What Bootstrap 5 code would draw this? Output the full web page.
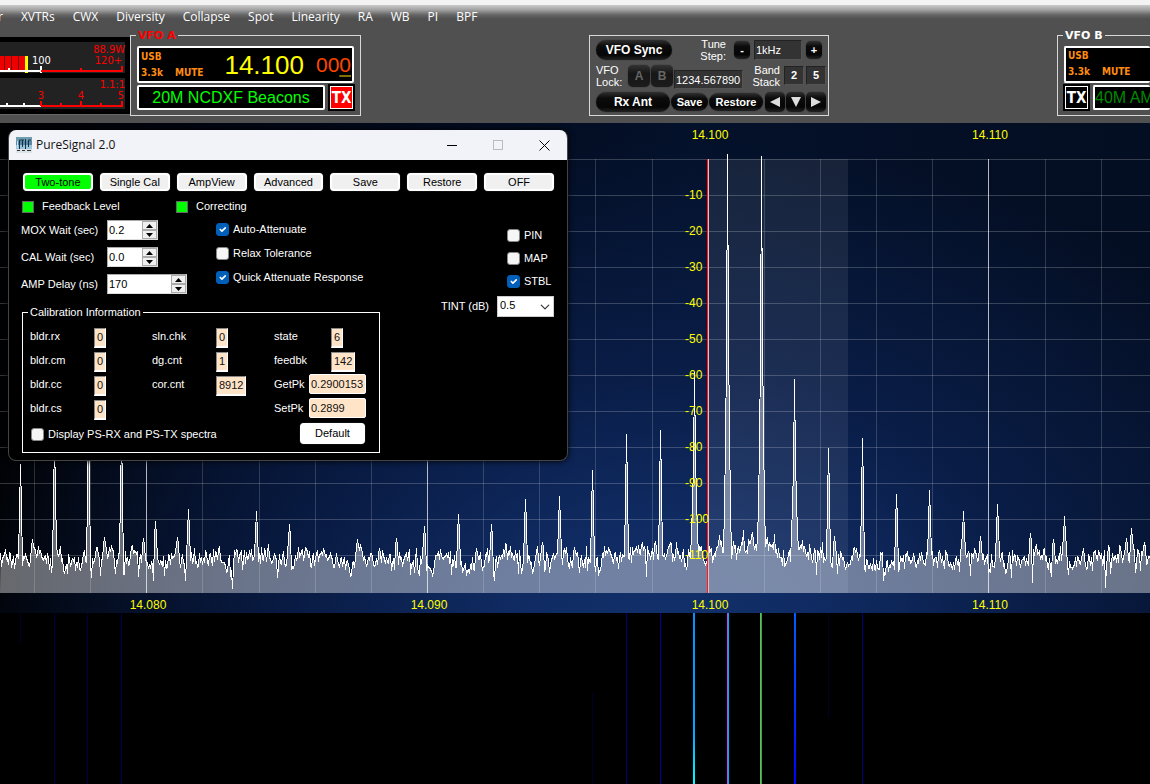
<!DOCTYPE html>
<html lang="en">
<head>
<meta charset="utf-8">
<meta name="viewport" content="width=device-width, initial-scale=1">
<title>PureSignal 2.0</title>
<link href="https://cdn.jsdelivr.net/npm/bootstrap@5.3.0/dist/css/bootstrap.min.css" rel="stylesheet">
<style>
body{font-family:"Liberation Sans",Arial,sans-serif;font-size:11px;line-height:13px;background:#000;color:#fff}
svg text{font-family:"Liberation Sans",Arial,sans-serif;font-size:12px}
label{cursor:default}
.console{background:linear-gradient(#cacaca,#a0a0a0 5px,#646464 10px,#505050 14px);border-top:5px solid #f3f3f3;height:123px}
.menu{height:24px;font:12px/24px "Open Sans",sans-serif;gap:18px;margin-left:-2px}
.menu a{color:#fff;text-decoration:none;white-space:nowrap}
.deck{margin-top:1px}
.tahoma{font-family:"DejaVu Sans Condensed","DejaVu Sans",sans-serif}
.meter{margin-top:7px}
.meter text{font-family:"DejaVu Sans Condensed","DejaVu Sans",sans-serif;font-size:11px}
/* VFO frames */
.vfo{border:1px solid #d8d8d8;height:87px;margin-top:-1px;padding:0 6px;min-width:0}
.vfo legend{float:none;width:auto;font:bold 11px/13px "DejaVu Sans",sans-serif;margin:0 0 4px -1px;padding:0 2px}
.vfo-a{width:231px}.vfo-a legend{color:#f00}
.vfo-b{width:93px;border-right:0;padding-right:0}
.lcd{background:#000;border:2px solid #fff;border-radius:2px;white-space:nowrap;overflow:hidden}
.readout{height:37px;padding:0 1px 0 2px;margin-bottom:2px}
.mode{color:#ff8c10;font-weight:bold;font-size:10px;line-height:16px;gap:12px}
.mhz{color:#ff0;font-size:26px;line-height:34px;margin-right:12px}
.hz{color:#ff4500;font-size:21px;line-height:34px}
.hz u{text-decoration-color:#807000;text-decoration-thickness:2px;text-underline-offset:3px}
.bandname{height:25px;line-height:21px;color:#0f0;font-size:16px;text-align:center}
.tx{width:25px;height:25px;background:#f00;border:1px solid #fff;outline:2px solid #000;outline-offset:-1px;box-shadow:inset 0 0 0 1px #fff;color:#fff;font:bold 15px/20px "DejaVu Sans Condensed",sans-serif;padding:0}
.tx.off{background:#000}
/* tuning panel */
.tuning{border:1px solid #d8d8d8;width:240px;height:81px;margin-top:5px;padding:1px 2px 0 6px;font-size:11px}
.tuning .lh-1{line-height:12px!important}
.pill{background:linear-gradient(#303030,#0c0c0c 30%,#060606 75%,#222);border:0;border-radius:10px;color:#fff;font:bold 12px/18px "Liberation Sans",Arial,sans-serif;height:20px;padding:0;text-align:center;box-shadow:0 0 1px #111}
.pill.sm{font-size:11px;height:18px}
.pill.key{border-radius:5px}
.pill.dim{color:#666;background:linear-gradient(#333,#161616 40%,#1c1c1c)}
.dark{background:#333;border:1px solid #555;border-top-color:#222;border-left-color:#222;color:#fff;font-size:11px;padding:0 1px;border-radius:0}
/* dialog */
.ps{position:absolute;left:8px;top:130px;width:560px;height:331px;background:#000;border:1px solid #444;border-top:0;border-radius:8px;overflow:hidden;box-shadow:0 0 6px #000}
.ps-title{background:#f1f3f9;color:#111;height:30px;font:12px/28px "Open Sans",sans-serif;padding:0 7px}
.ps-title button{border:0;background:none;width:46px;height:28px;padding:0}
.ps-body{padding:13px 13px 0 12px}
.modes{gap:5px;margin:0 -1px 0 1px}
.status{padding:6px 0 0 1px;margin-top:3px}
.wbtn{background:#f0f0f0;border:2px solid #fff;border-radius:4px;color:#000;font-size:11px;line-height:13px;height:18px;padding:0;box-shadow:0 0 1px #888}
.wbtn.row-btn{flex:1 1 0;margin:0 1px}
.wbtn.go{background:#0f0}
.wbtn.def{background:#fff;width:65px;height:21px;margin-top:-1px}
.led{width:12px;height:12px;background:#0f0;border:1px solid #666}
.numrow{height:20px;margin-bottom:7px}
.numrow label{width:86px;white-space:nowrap}
.numbox{background:#fff;border:1px solid #888;border-color:#aaa #ddd #ddd #aaa;width:51px;height:20px}
.numbox.wide{width:80px}
.numbox input{border:0;background:#fff;width:100%;min-width:0;padding:0 1px;font-size:11px;line-height:16px;color:#000;outline:0}
.numbox button{border:1px solid #aaa;background:#f0f0f0;width:15px;height:9px;padding:0;line-height:0;display:block}
.check{display:flex;align-items:center;gap:4px;height:13px;white-space:nowrap}
.check .form-check-input{width:13px;height:13px;margin:0;border-radius:3px;background-color:#f6f6f6;border-color:#888;flex:none}
.check .form-check-input:checked{background-color:#005fb8;border-color:#005fb8}
.tint{width:57px;height:21px;font-size:11px;line-height:17px;padding:0 16px 2px 2px;border-radius:0;border:1px solid #ccc;background-color:#fff;color:#000;background-position:right 3px center;background-size:10px 10px}
.calib{border:1px solid #fff;width:358px;height:147px;margin-top:5px;padding:0 7px}
.calib legend{float:none;width:auto;font-size:11px;line-height:13px;margin:0 0 9px -2px;padding:0 2px}
.calib-grid{display:grid;grid-template-columns:122px 122px 1fr}
.calib-grid label{width:64px}
.calib-grid .c3 label{width:57px}
.calib-grid .c3 label.pk{width:35px}
.item{height:24px;display:flex;align-items:flex-start}
.item label{padding-top:2px}
.val{background:#ffe4c8;color:#111;font-size:11px;line-height:16px;height:20px;border-top:1px solid #888;border-left:1px solid #888;border-right:1px solid #fff;border-bottom:2px solid #fff;padding:0 2px;min-width:12px}
.peak{background:#ffe4c8;border:1px solid #fff;border-radius:2px;width:57px;height:20px;padding:0 1px;font-size:11px;color:#111;margin-top:-2px}
.scope{display:block;width:100%;height:auto;background:
 radial-gradient(ellipse 62% 100% at 58% 103%,#12306b 0,#102b62 22%,rgba(10,31,76,.85) 52%,rgba(4,14,38,0) 100%),
 linear-gradient(90deg,#010204,#020716 25%,#04112a 60%,#040e22)}
.fall{display:block;width:100%;flex:1 1 171px;min-height:0;background:#000}
</style>
</head>
<body class="d-flex flex-column vh-100 overflow-hidden position-relative">
<header class="console flex-shrink-0 overflow-hidden">
  <nav class="menu d-flex">
    <a href="#">r</a><a href="#">XVTRs</a><a href="#">CWX</a><a href="#">Diversity</a><a href="#">Collapse</a><a href="#">Spot</a><a href="#">Linearity</a><a href="#">RA</a><a href="#">WB</a><a href="#">PI</a><a href="#">BPF</a>
  </nav>
  <div class="deck d-flex justify-content-between">
    <div class="d-flex">
      <svg class="meter flex-shrink-0" width="130" height="78" viewBox="0 0 130 78">
        <path d="M0 0H130V78H0Z" fill="#000"/><path d="M0 77.500H130.500V0" stroke="#666" fill="none"/>
        <path d="M0 5H125V36H0ZM0 41H125V72H0Z" fill="#222"/>
        <path d="M0 19H27V33H0Z" fill="#e00"/><path d="M4.500 19V33M11.500 19V33M18.500 19V33" stroke="#700"/>
        <path d="M26.500 19V36" stroke="#ff0" stroke-width="3"/>
        <path d="M0 34H41M41 36V29M9 34V31" stroke="#fff" stroke-width="2"/>
        <path d="M41 34H123M122 35V29M81 34V31" stroke="#f00" stroke-width="2"/>
        <path d="M0 69H41M7 69V66M24 69V66" stroke="#fff" stroke-width="2"/>
        <path d="M41 69H123M41 69V64M61 69V66M81 69V64M101 69V66M122 69V64" stroke="#f00" stroke-width="2"/>
        <text x="32" y="27" fill="#fff">100</text>
        <g fill="#f00" text-anchor="end"><text x="125" y="16">88.9W</text><text x="122" y="27">120+</text><text x="125" y="51">1.1:1</text></g>
        <g fill="#f00" text-anchor="middle"><text x="41" y="62">3</text><text x="81" y="62">4</text><text x="121" y="62">5</text></g>
      </svg>
      <fieldset class="vfo vfo-a">
        <legend>VFO A</legend>
        <div class="lcd readout d-flex justify-content-between">
          <div class="mode tahoma d-flex align-items-end"><div>USB<br>3.3k</div><div>MUTE</div></div>
          <div class="d-flex"><span class="mhz">14.100</span><span class="hz">00<u>0</u></span></div>
        </div>
        <div class="d-flex gap-1"><div class="lcd bandname flex-grow-1">20M NCDXF Beacons</div><button class="tx">TX</button></div>
      </fieldset>
    </div>
    <section class="tuning flex-shrink-0">
      <div class="d-flex align-items-center" style="height:25px">
        <button class="pill" style="width:76px">VFO Sync</button>
        <label for="step" class="text-end lh-1 ms-auto me-2">Tune<br>Step:</label>
        <button class="pill sm key" style="width:16px">-</button>
        <input id="step" class="dark mx-1" style="width:48px;height:20px" value="1kHz">
        <button class="pill sm key me-1" style="width:16px">+</button>
      </div>
      <div class="d-flex align-items-center" style="height:27px">
        <span class="lh-1" style="width:32px">VFO<br>Lock:</span>
        <button class="pill dim key" style="width:22px;height:22px">A</button><button class="pill dim key" style="width:22px;height:22px;margin-left:1px">B</button>
        <input aria-label="Saved frequency" class="dark mt-2" style="width:69px;height:19px;margin-left:1px" value="1234.567890">
        <span class="text-end lh-1 ms-auto me-1">Band<br>Stack</span>
        <button class="dark fw-bold" style="width:20px;height:19px">2</button><button class="dark fw-bold" style="width:20px;height:19px;margin-left:2px">5</button>
      </div>
      <div class="d-flex align-items-center" style="height:25px;gap:1px">
        <button class="pill" style="width:74px">Rx Ant</button>
        <button class="pill sm" style="width:37px">Save</button>
        <button class="pill sm" style="width:54px">Restore</button>
        <span class="d-flex ms-auto" style="gap:1px">
        <button class="pill key" style="width:20px" aria-label="Previous"><svg width="12" height="12" class="d-block m-auto"><path d="M11 1V11L1 6Z" fill="#ddd"/></svg></button>
        <button class="pill key" style="width:19px" aria-label="Down"><svg width="12" height="12" class="d-block m-auto"><path d="M1 1H11L6 11Z" fill="#ddd"/></svg></button>
        <button class="pill key" style="width:20px" aria-label="Next"><svg width="12" height="12" class="d-block m-auto"><path d="M1 1V11L11 6Z" fill="#ddd"/></svg></button></span>
      </div>
    </section>
    <fieldset class="vfo vfo-b">
      <legend>VFO B</legend>
      <div class="lcd readout border-end-0"><div class="mode tahoma d-flex align-items-end"><div>USB<br>3.3k</div><div>MUTE</div></div></div>
      <div class="d-flex gap-1"><button class="tx off flex-shrink-0">TX</button><div class="lcd bandname border-end-0 text-start flex-grow-1" style="color:#008a00;width:10px">40M AM</div></div>
    </fieldset>
  </div>
</header>

<svg class="scope flex-shrink-0" viewBox="0 123 1150 490">
  <path d="M708 159H848V593H708Z" fill="#fff" fill-opacity=".08"/>
  <g id="grid" shape-rendering="crispEdges"></g>
  <path id="area" fill="#fff" fill-opacity=".4"/>
  <path id="trace" fill="none" stroke="#fff" shape-rendering="crispEdges"/>
  <path d="M707 159h1V593h-1Z" fill="#ff1a1a"/><path d="M708 159h1V593h-1Z" fill="#ffb4b4"/>
  <g id="labels" fill="#ff0"></g>
</svg>
<svg class="fall" viewBox="0 0 1150 171" preserveAspectRatio="none" shape-rendering="crispEdges">
  <defs><linearGradient id="cy" x1="0" x2="0" y1="0" y2="1"><stop offset="0" stop-color="#0090ff"/><stop offset=".7" stop-color="#00a8ff"/><stop offset="1" stop-color="#00ffff"/></linearGradient>
  <linearGradient id="bl" x1="0" x2="0" y1="0" y2="1"><stop offset="0" stop-color="#0060ff"/><stop offset="1" stop-color="#0000ff"/></linearGradient></defs>
  <path d="M693 0h2v171h-2z" fill="url(#cy)"/>
  <path d="M727 0h1v171h-1z" fill="#b050f0"/><path d="M728 0h1v171h-1z" fill="#00a8ff"/>
  <path d="M760 0h1v171h-1z" fill="#0f0"/><path d="M761 0h1v171h-1z" fill="#a060a0"/>
  <path d="M794 0h2v171h-2z" fill="url(#bl)"/>
  <path d="M626 0h1v171h-1zM862 0h1v171h-1z" fill="#000078"/><path d="M660 0h1v171h-1z" fill="#0000a0"/>
  <path d="M54 0h1v171h-1zM87 0h1v171h-1z" fill="#00003c"/><path d="M121 0h1v171h-1z" fill="#000058"/>
  <path d="M828 0h1v105h-1zM592 80h1v91h-1zM20 0h1v30h-1z" fill="#000028"/>
</svg>

<div class="ps" role="dialog" aria-label="PureSignal 2.0">
  <div class="ps-title d-flex align-items-center">
    <svg width="16" height="16" class="me-1"><rect width="16" height="16" fill="#5b89a4"/><path d="M0 0H16V4H0Z" fill="#6f9fae"/><path d="M0 8H16V12H0Z" fill="#9cc6dc"/><path d="M3.500 12V3H8M6.500 3V10M9.500 12V2M12.500 10V3H15" stroke="#14304d" fill="none"/><path d="M1.500 4V11" stroke="#c3e3ef"/><path d="M0 12H16V16H0Z" fill="#dce4ea"/><path d="M1 13.500H4M6 13.500H9M11 13.500H15" stroke="#333"/></svg>
    <span class="me-auto">PureSignal 2.0</span>
    <button aria-label="Minimize"><svg width="11" height="11" class="d-block m-auto"><path d="M0 5.500H10" stroke="#000"/></svg></button>
    <button aria-label="Maximize" disabled><svg width="11" height="11" class="d-block m-auto"><rect x=".5" y=".5" width="9" height="9" fill="none" stroke="#bbb"/></svg></button>
    <button aria-label="Close" style="margin-right:-7px"><svg width="11" height="11" class="d-block m-auto"><path d="M.5 .5L10.500 10.500M10.500 .5L.5 10.500" stroke="#000"/></svg></button>
  </div>
  <div class="ps-body">
    <div class="modes d-flex">
      <button class="wbtn row-btn go">Two-tone</button><button class="wbtn row-btn">Single Cal</button><button class="wbtn row-btn">AmpView</button><button class="wbtn row-btn">Advanced</button><button class="wbtn row-btn">Save</button><button class="wbtn row-btn">Restore</button><button class="wbtn row-btn">OFF</button>
    </div>
    <div class="status d-flex align-items-center">
      <span class="led me-2"></span><span style="width:134px">Feedback Level</span><span class="led me-2"></span><span>Correcting</span>
    </div>
    <div class="d-flex">
      <div style="width:359px;padding-top:7px">
        <div class="d-flex">
          <div style="width:195px">
            <div class="numrow d-flex align-items-center"><label for="mox">MOX Wait (sec)</label><div class="numbox d-flex"><input id="mox" value="0.2"><div class="spin"></div></div></div>
            <div class="numrow d-flex align-items-center"><label for="cal">CAL Wait (sec)</label><div class="numbox d-flex"><input id="cal" value="0.0"><div class="spin"></div></div></div>
            <div class="numrow d-flex align-items-center"><label for="amp">AMP Delay (ns)</label><div class="numbox wide d-flex"><input id="amp" value="170"><div class="spin"></div></div></div>
          </div>
          <div class="d-flex flex-column" style="gap:11px;padding-top:3px">
            <label class="check"><input type="checkbox" class="form-check-input" checked>Auto-Attenuate</label>
            <label class="check"><input type="checkbox" class="form-check-input">Relax Tolerance</label>
            <label class="check"><input type="checkbox" class="form-check-input" checked>Quick Attenuate Response</label>
          </div>
        </div>
        <fieldset class="calib ms-auto">
          <legend>Calibration Information</legend>
          <div class="calib-grid">
            <div>
              <div class="item"><label>bldr.rx</label><output class="val">0</output></div>
              <div class="item"><label>bldr.cm</label><output class="val">0</output></div>
              <div class="item"><label>bldr.cc</label><output class="val">0</output></div>
              <div class="item"><label>bldr.cs</label><output class="val">0</output></div>
            </div>
            <div>
              <div class="item"><label>sln.chk</label><output class="val">0</output></div>
              <div class="item"><label>dg.cnt</label><output class="val">1</output></div>
              <div class="item"><label>cor.cnt</label><output class="val">8912</output></div>
            </div>
            <div class="c3">
              <div class="item"><label>state</label><output class="val">6</output></div>
              <div class="item"><label>feedbk</label><output class="val">142</output></div>
              <div class="item"><label class="pk" for="getpk">GetPk</label><input id="getpk" class="peak" value="0.2900153"></div>
              <div class="item"><label class="pk" for="setpk">SetPk</label><input id="setpk" class="peak" value="0.2899"></div>
            </div>
          </div>
          <div class="d-flex align-items-center justify-content-between" style="padding:0 7px 0 1px">
            <label class="check"><input type="checkbox" class="form-check-input">Display PS-RX and PS-TX spectra</label>
            <button class="wbtn def">Default</button>
          </div>
        </fieldset>
      </div>
      <div class="ms-auto d-flex flex-column" style="gap:10px;padding-top:16px">
        <label class="check" style="margin-left:66px"><input type="checkbox" class="form-check-input">PIN</label>
        <label class="check" style="margin-left:66px"><input type="checkbox" class="form-check-input">MAP</label>
        <label class="check" style="margin-left:66px"><input type="checkbox" class="form-check-input" checked>STBL</label>
        <div class="d-flex align-items-center" style="margin-top:-2px"><label for="tint" class="me-2">TINT (dB)</label><select id="tint" class="form-select tint"><option>0.5</option></select></div>
      </div>
    </div>
  </div>
</div>

<script src="https://cdn.jsdelivr.net/npm/bootstrap@5.3.0/dist/js/bootstrap.bundle.min.js"></script>
<script>
// spin buttons of the numeric boxes
document.querySelectorAll('.spin').forEach(s => {
  s.innerHTML = '<button aria-label="Up"><svg width="7" height="4"><path d="M0 4L3.500 0L7 4Z"/></svg></button><button aria-label="Down"><svg width="7" height="4"><path d="M0 0H7L3.500 4Z"/></svg></button>';
});
// graticule: 10 kHz majors, 2 kHz minors, 10 dB rows
let g = '';
for (let i = -12; i <= 8; i++) {
  const x = Math.floor(708.2 + i * 56.15) + .5;
  if (i) g += `<path d="M${x} 159V593" stroke="#fff" stroke-opacity="${i % 5 ? .17 : .7}"/>`;
}
for (let y = 159.5; y < 560; y += 36) g += `<path d="M0 ${y}H1150" stroke="#fff" stroke-opacity=".2"/>`;
document.getElementById('grid').innerHTML = g;
// axis labels
let t = '';
[[710,'14.100'],[990,'14.110']].forEach(a => t += `<text x="${a[0]}" y="139" text-anchor="middle">${a[1]}</text>`);
[[148,'14.080'],[429,'14.090'],[710,'14.100'],[990,'14.110']].forEach(a => t += `<text x="${a[0]}" y="609" text-anchor="middle">${a[1]}</text>`);
for (let i = 1; i <= 11; i++) t += `<text x="685" y="${163 + i * 36}">-${i * 10}</text>`;
document.getElementById('labels').innerHTML = t;
// spectrum trace: noise floor plus carriers and intermodulation products
let seed = 41;
const rnd = () => (seed = (seed * 16807) % 2147483647) / 2147483647;
const Y = [];
let drift = 0;
for (let x = 0; x <= 1150; x++) {
  drift = drift * .78 + (rnd() - .5) * 9;
  let y = 559 + drift + (rnd() - .5) * 17;
  if (rnd() < .04) y += 9;
  if (rnd() < .04) y -= 9;
  if (x > 715 && x < 775) y -= 11;
  else if (x > 600 && x < 835) y -= 3;
  Y.push(y);
}
const peaks = [[20,464],[54,440],[88,430],[121,435],[32,539],[104,537],[143,538],[155,521],[177,537],[188,509],[256,511],[289,524],[357,539],[396,538],[424,526],[458,514],[491,524],[525,499],[542,542],[559,496],[592,470],[626,434],[660,430],[694,372],[727,154],[761,156],[794,379],[828,448],[834,536],[862,438],[896,494],[929,490],[963,511],[980,536],[997,504],[1030,533],[1053,539],[1064,516],[1126,538],[1131,528],[719,535],[752,532]];
peaks.forEach(([x, top]) => {
  const h = 555 - top, put = (i, f) => { Y[x + i] = Math.min(Y[x + i], top + h * f); };
  put(0, 0); put(-1, .5); put(1, .45);
  if (h > 150) { put(-2, .72); put(2, .7); put(-3, .88); put(3, .87); }
});
[[80,571],[91,578],[124,574],[138,577],[153,581],[185,581],[410,575],[518,574],[646,577],[816,575],[884,572],[959,572],[1011,578],[1032,583],[1105,588]].forEach(([x, y]) => Y[x] = y);
const line = Y.map((y, x) => (x ? 'L' : 'M') + (x + .5) + ' ' + Math.round(y)).join('');
document.getElementById('trace').setAttribute('d', line);
document.getElementById('area').setAttribute('d', line + 'V593H0Z');
</script>
</body>
</html>
